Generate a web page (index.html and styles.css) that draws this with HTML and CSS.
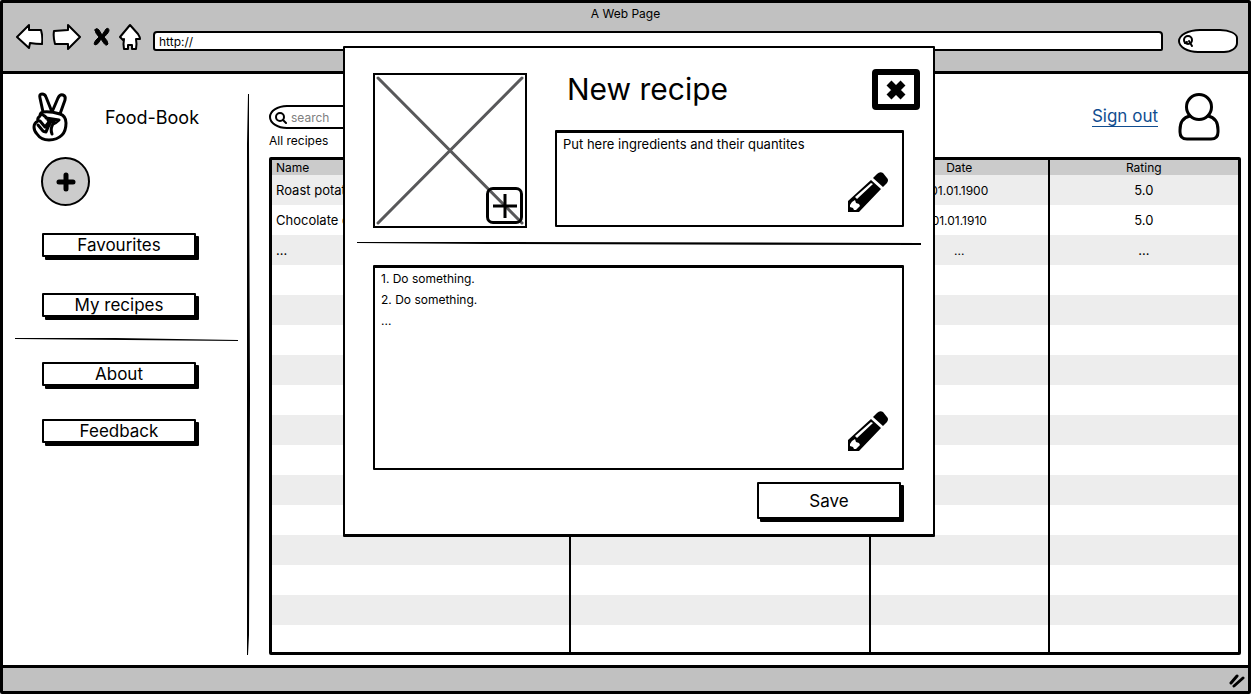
FILE: index.html
```html
<!DOCTYPE html>
<html lang="en">
<head>
<meta charset="utf-8">
<title>Food-Book</title>
<link rel="stylesheet" href="styles.css">
</head>
<body>
<svg class="defs" aria-hidden="true">
  <symbol id="pencil" viewBox="0 0 42 42">
    <path d="M30 3Q33 0 36 2L40 7Q42 9 40 12L36 16L26 7ZM24 9L34 18L12 41H1V30ZM5 31L3 34V36L6 37L7 39H9L13 35L12 33L9 32L8 29ZM8 26L10 28L26 13L24 12Z" fill-rule="evenodd"/>
  </symbol>
</svg>

<div class="browser">
  <header class="chrome">
    <div class="chrome-title">A Web Page</div>
    <nav class="toolbar">
      <button class="tool" aria-label="Back"><svg width="28" height="26" viewBox="0 0 28 26"><path class="white" d="M14 1L2 13L14 24L15 19Q21 20 27 20Q28 13 26 6L14 6Z"/></svg></button>
      <button class="tool" aria-label="Forward"><svg width="30" height="28" viewBox="0 0 30 28"><path class="white" d="M16 2L28 14L16 26L16 21Q9 21 3 21Q1 14 2 8L16 7Z"/></svg></button>
      <button class="tool stop" aria-label="Stop"><svg width="18" height="20" viewBox="0 0 18 20"><path d="M2 3Q3 0 6 3L9 8L13 2Q16 0 16 4Q15 7 11 10Q15 14 15 17Q13 20 10 15L8 12Q5 18 2 18Q0 17 3 13L6 10Q2 6 2 3Z"/></svg></button>
      <button class="tool" aria-label="Home"><svg width="24" height="28" viewBox="0 0 24 28"><path class="white" d="M12 2L2 14L5 17L6 16Q5 21 6 26H10V22H14V26H18Q19 21 18 16L22 16Q22 14 20 11Z"/></svg></button>
      <input class="address" type="text" value="http://" aria-label="Address">
      <label class="web-search">
        <svg width="12" height="14" viewBox="0 0 12 14"><circle cx="6" cy="6" r="4"/><path d="M3 9L5 8M7 7L10 12"/></svg>
        <input type="text" aria-label="Web search">
      </label>
    </nav>
  </header>

  <div class="page">
    <aside class="sidebar">
      <div class="brand">
        <svg width="36" height="50" viewBox="0 0 36 50" aria-hidden="true"><path d="M11 20L8 6Q7 2 10 2Q13 2 14 5L20 20L26 6Q28 2 31 3Q34 4 33 8L28 22Q34 24 34 31Q34 39 30 43Q25 48 17 48Q9 48 5 42Q2 39 2 35Q2 31 6 29Q5 26 8 24Q8 21 11 20Q18 19 28 22M11 23Q15 25 17 30L13 35L8 29M14 26L27 28Q24 31 21 32Q18 37 20 42M6 33L11 39Q14 41 15 37M18 31Q16 35 14 40M17 29L22 30"/></svg>
        <span>Food-Book</span>
      </div>
      <button class="add" aria-label="Add recipe"><svg width="20" height="20" viewBox="0 0 20 20"><path d="M10 3V17M3 10H17"/></svg></button>
      <nav class="menu">
        <button class="btn">Favourites</button>
        <button class="btn">My recipes</button>
      </nav>
      <svg class="rule" viewBox="0 0 222 4" preserveAspectRatio="none" aria-hidden="true"><path d="M0 0L100 0L222 2V3L110 2L0 1Z"/></svg>
      <nav class="menu lower">
        <button class="btn">About</button>
        <button class="btn">Feedback</button>
      </nav>
    </aside>
    <svg class="vrule" viewBox="0 0 4 560" preserveAspectRatio="none" aria-hidden="true"><path d="M2 0L1 50V540L1 560L2 560L3 540L4 300L3 50V0Z"/></svg>

    <main class="content">
      <div class="topbar">
        <div class="finder">
          <label class="search">
            <svg width="12" height="13" viewBox="0 0 12 13"><circle cx="5" cy="6" r="4"/><path d="M8 9L11 12"/></svg>
            <input type="search" placeholder="search" aria-label="Search recipes">
          </label>
          <div class="caption">All recipes</div>
        </div>
        <div class="account">
          <a href="#">Sign out</a>
          <svg width="42" height="48" viewBox="0 0 42 48" aria-hidden="true"><circle cx="21" cy="14" r="12.500"/><path d="M12 23Q2 25 2 37V39Q2 46 9 46H33Q40 46 40 39V37Q40 25 30 23"/></svg>
        </div>
      </div>
      <div class="table-frame">
        <table>
          <colgroup><col class="c-name"><col class="c-mid"><col class="c-date"><col class="c-rating"></colgroup>
          <thead><tr><th>Name</th><th></th><th>Date</th><th>Rating</th></tr></thead>
          <tbody>
            <tr><td>Roast potatoes</td><td></td><td>01.01.1900</td><td>5.0</td></tr>
            <tr><td>Chocolate cake</td><td></td><td>01.01.1910</td><td>5.0</td></tr>
            <tr><td>...</td><td></td><td>...</td><td>...</td></tr>
            <tr><td></td><td></td><td></td><td></td></tr>
            <tr><td></td><td></td><td></td><td></td></tr>
            <tr><td></td><td></td><td></td><td></td></tr>
            <tr><td></td><td></td><td></td><td></td></tr>
            <tr><td></td><td></td><td></td><td></td></tr>
            <tr><td></td><td></td><td></td><td></td></tr>
            <tr><td></td><td></td><td></td><td></td></tr>
            <tr><td></td><td></td><td></td><td></td></tr>
            <tr><td></td><td></td><td></td><td></td></tr>
            <tr><td></td><td></td><td></td><td></td></tr>
            <tr><td></td><td></td><td></td><td></td></tr>
            <tr><td></td><td></td><td></td><td></td></tr>
            <tr><td></td><td></td><td></td><td></td></tr>
          </tbody>
        </table>
      </div>
    </main>
  </div>

  <footer class="status"><svg width="18" height="16" viewBox="0 0 18 16" aria-hidden="true"><path d="M3 11L9 4M6 14L15 6"/></svg></footer>

  <section class="modal" role="dialog" aria-labelledby="modal-title">
    <div class="modal-top">
      <div class="photo">
        <svg class="cross" viewBox="0 0 148 150" preserveAspectRatio="none" aria-hidden="true"><path d="M3 3L145 147M145 3L3 147"/></svg>
        <button class="photo-add" aria-label="Add photo"><svg width="24" height="24" viewBox="0 0 24 24"><path d="M12 0V24M0 12H24"/></svg></button>
      </div>
      <div class="details">
        <div class="modal-head">
          <h1 id="modal-title">New recipe</h1>
          <button class="close" aria-label="Close"><svg width="20" height="20" viewBox="0 0 20 20"><path d="M3 3L17 17M17 3L3 17"/></svg></button>
        </div>
        <div class="field">
          <textarea class="ingredients" aria-label="Ingredients">Put here ingredients and their quantites</textarea>
          <svg class="edit" aria-hidden="true"><use href="#pencil"/></svg>
        </div>
      </div>
    </div>
    <svg class="modal-rule" viewBox="0 0 562 4" preserveAspectRatio="none" aria-hidden="true"><path d="M0 0L150 0L562 1V3L130 2L0 1Z"/></svg>
    <div class="modal-body">
      <div class="field">
        <textarea class="steps" aria-label="Steps">1. Do something.
2. Do something.
...</textarea>
        <svg class="edit" aria-hidden="true"><use href="#pencil"/></svg>
      </div>
      <button class="btn save">Save</button>
    </div>
  </section>
</div>
</body>
</html>
```
FILE: styles.css
```css
* { box-sizing: border-box; }

body {
  margin: 0;
  background: #fff;
  color: #000;
  font-family: Inter, "Liberation Sans", sans-serif;
  font-size: 13px;
}

button, input, textarea {
  margin: 0;
  padding: 0;
  border: 0;
  background: none;
  color: inherit;
  font: inherit;
  outline: 0;
}

svg {
  display: block;
  flex: none;
  fill: none;
  stroke: #000;
  stroke-width: 3px;
  stroke-linecap: round;
  stroke-linejoin: round;
}

.defs { position: absolute; width: 0; height: 0; }

.browser {
  position: relative;
  display: flex;
  flex-direction: column;
  height: 100vh;
  border: 3px solid #000;
  border-radius: 2px;
}

/* Browser chrome */
.chrome {
  height: 71px;
  background: #c1c1c1;
  border-bottom: 3px solid #000;
}

.chrome-title {
  height: 21px;
  line-height: 21px;
  text-align: center;
  font-size: 12px;
}

.toolbar {
  display: flex;
  align-items: center;
  height: 26px;
  padding: 0 10px 0 12px;
}

.tool + .tool { margin-left: 9px; }
.tool svg { stroke-width: 2px; }
.tool + .stop { margin-left: 11px; }
.stop + .tool { margin-left: 7px; }
.tool.stop svg { fill: #000; stroke-width: 1px; }
.white { fill: #fff; }

.address {
  flex: 1;
  min-width: 0;
  height: 20px;
  margin: 8px 15px 0 11px;
  padding: 0 4px;
  border: 2px solid #000;
  border-radius: 4px 4px 2px 3px;
  background: #fff;
  font-size: 12px;
}

.web-search {
  display: flex;
  align-items: center;
  width: 60px;
  height: 24px;
  margin-top: 8px;
  padding-left: 2px;
  border: 2px solid #000;
  border-radius: 22px 18px 14px 20px / 12px 9px 10px 12px;
  background: #fff;
}

.web-search svg { stroke-width: 2px; }
.web-search input { width: 100%; min-width: 0; }

/* Page */
.page {
  display: flex;
  flex: 1;
  min-height: 0;
  padding: 20px 7px 10px 12px;
}

.sidebar {
  display: flex;
  flex-direction: column;
  width: 223px;
}

.brand {
  display: flex;
  align-items: center;
  gap: 37px;
  height: 46px;
  padding-left: 17px;
  font-size: 18px;
}

.brand svg { stroke-width: 3px; }

.add {
  display: grid;
  place-items: center;
  width: 49px;
  height: 49px;
  margin: 17px 0 27px 26px;
  border: 2px solid #000;
  border-radius: 50%;
  background: #ccc;
}

.add svg { stroke-width: 5px; }

.menu {
  display: flex;
  flex-direction: column;
  gap: 36px;
  padding: 0 42px 0 27px;
}

.menu.lower { gap: 33px; }

.btn {
  height: 24px;
  border: 2px solid #000;
  border-radius: 1px;
  background: #fff;
  box-shadow: 3px 3px 0 #000;
  font-size: 17px;
  line-height: 20px;
}

.rule {
  width: 100%;
  height: 4px;
  margin: 21px 0 20px;
  fill: #000;
  stroke: none;
}

.vrule {
  width: 4px;
  height: 100%;
  margin: 0 19px 0 8px;
  fill: #000;
  stroke: none;
}

.content {
  display: flex;
  flex: 1;
  flex-direction: column;
  min-width: 0;
}

.topbar {
  display: flex;
  justify-content: space-between;
  height: 63px;
}

.search {
  display: flex;
  align-items: center;
  gap: 4px;
  width: 220px;
  height: 24px;
  margin-top: 11px;
  padding: 0 4px;
  border: 2px solid #000;
  border-radius: 18px / 12px;
}

.search svg { stroke-width: 2px; }
.search input { width: 100%; font-size: 12px; }
.search input::placeholder { color: #808080; opacity: 1; }
.caption { margin-top: 4px; line-height: 16px; font-size: 12px; }

.account {
  display: flex;
  align-items: center;
  gap: 20px;
  height: 46px;
  padding-right: 21px;
}

.account a {
  border-bottom: 1px solid #104d90;
  color: #104d90;
  font-size: 17px;
  line-height: 19px;
  text-decoration: none;
}

.table-frame {
  flex: 1;
  min-height: 0;
  overflow: hidden;
  border: 3px solid #000;
  border-radius: 2px;
}

table {
  width: 100%;
  border-collapse: separate;
  border-spacing: 0;
  table-layout: fixed;
}

.c-name { width: 31%; }
.c-mid { width: 31%; }
.c-date { width: 18.5%; }

th, td {
  height: 30px;
  padding: 0 4px;
  border-right: 2px solid #000;
  text-align: center;
  font-weight: 400;
  font-size: 12px;
}

th { height: 15px; background: #cbcbcb; line-height: 15px; }
th:first-child, td:first-child { text-align: left; }
td:first-child { font-size: 13px; }
th:last-child, td:last-child { border-right: 0; }
td:last-child { font-size: 13px; }
tbody tr:nth-child(odd) { background: #ededed; }

.status {
  display: flex;
  align-items: center;
  justify-content: flex-end;
  height: 26px;
  padding-right: 2px;
  border-top: 3px solid #000;
  background: #c1c1c1;
}

/* New recipe dialog */
.modal {
  position: absolute;
  top: 43px;
  right: 313px;
  left: 340px;
  padding: 25px 12px 15px;
  border: 2px solid #000;
  border-bottom-width: 3px;
  border-radius: 1px;
  background: #fff;
}

.modal-top {
  display: flex;
  gap: 28px;
  padding: 0 1px 0 16px;
}

.photo {
  position: relative;
  width: 154px;
  height: 155px;
  border: 2px solid #000;
}

.cross { width: 100%; height: 100%; stroke: #58585a; }

.photo-add {
  position: absolute;
  right: 2px;
  bottom: 2px;
  display: grid;
  place-items: center;
  width: 37px;
  height: 37px;
  border: 3px solid #000;
  border-radius: 7px;
}

.photo-add svg { stroke-linecap: butt; }

.details { flex: 1; min-width: 0; }

.modal-head {
  display: flex;
  justify-content: space-between;
  height: 57px;
}

h1 {
  margin: 0 0 0 12px;
  font-weight: 400;
  font-size: 30px;
  line-height: 32px;
}

.close {
  display: grid;
  place-items: center;
  width: 48px;
  height: 41px;
  margin-top: -4px;
  border: 6px solid #000;
  border-radius: 4px;
}

.close svg { stroke-width: 7px; stroke-linecap: butt; }

.field { position: relative; margin-right: 16px; }

textarea {
  display: block;
  width: 100%;
  padding: 1px 6px;
  border: 2px solid #000;
  border-top-width: 3px;
  border-radius: 1px;
  resize: none;
  overflow: hidden;
  font-size: 13px;
  line-height: 21px;
}

.ingredients { height: 97px; }
.steps { height: 205px; padding-top: 0; font-size: 12px; }
.modal-body .field { margin-right: 0; }

.edit {
  position: absolute;
  right: 15px;
  bottom: 14px;
  width: 42px;
  height: 42px;
  fill: #000;
  stroke: none;
}

.steps + .edit { bottom: 18px; }

.modal-rule {
  width: 100%;
  height: 4px;
  margin: 14px 0 19px;
  fill: #000;
  stroke: none;
}

.modal-body {
  display: flex;
  flex-direction: column;
  padding: 0 17px 0 16px;
}

.save {
  align-self: flex-end;
  width: 144px;
  height: 37px;
  margin: 12px 3px 0 0;
}
```
